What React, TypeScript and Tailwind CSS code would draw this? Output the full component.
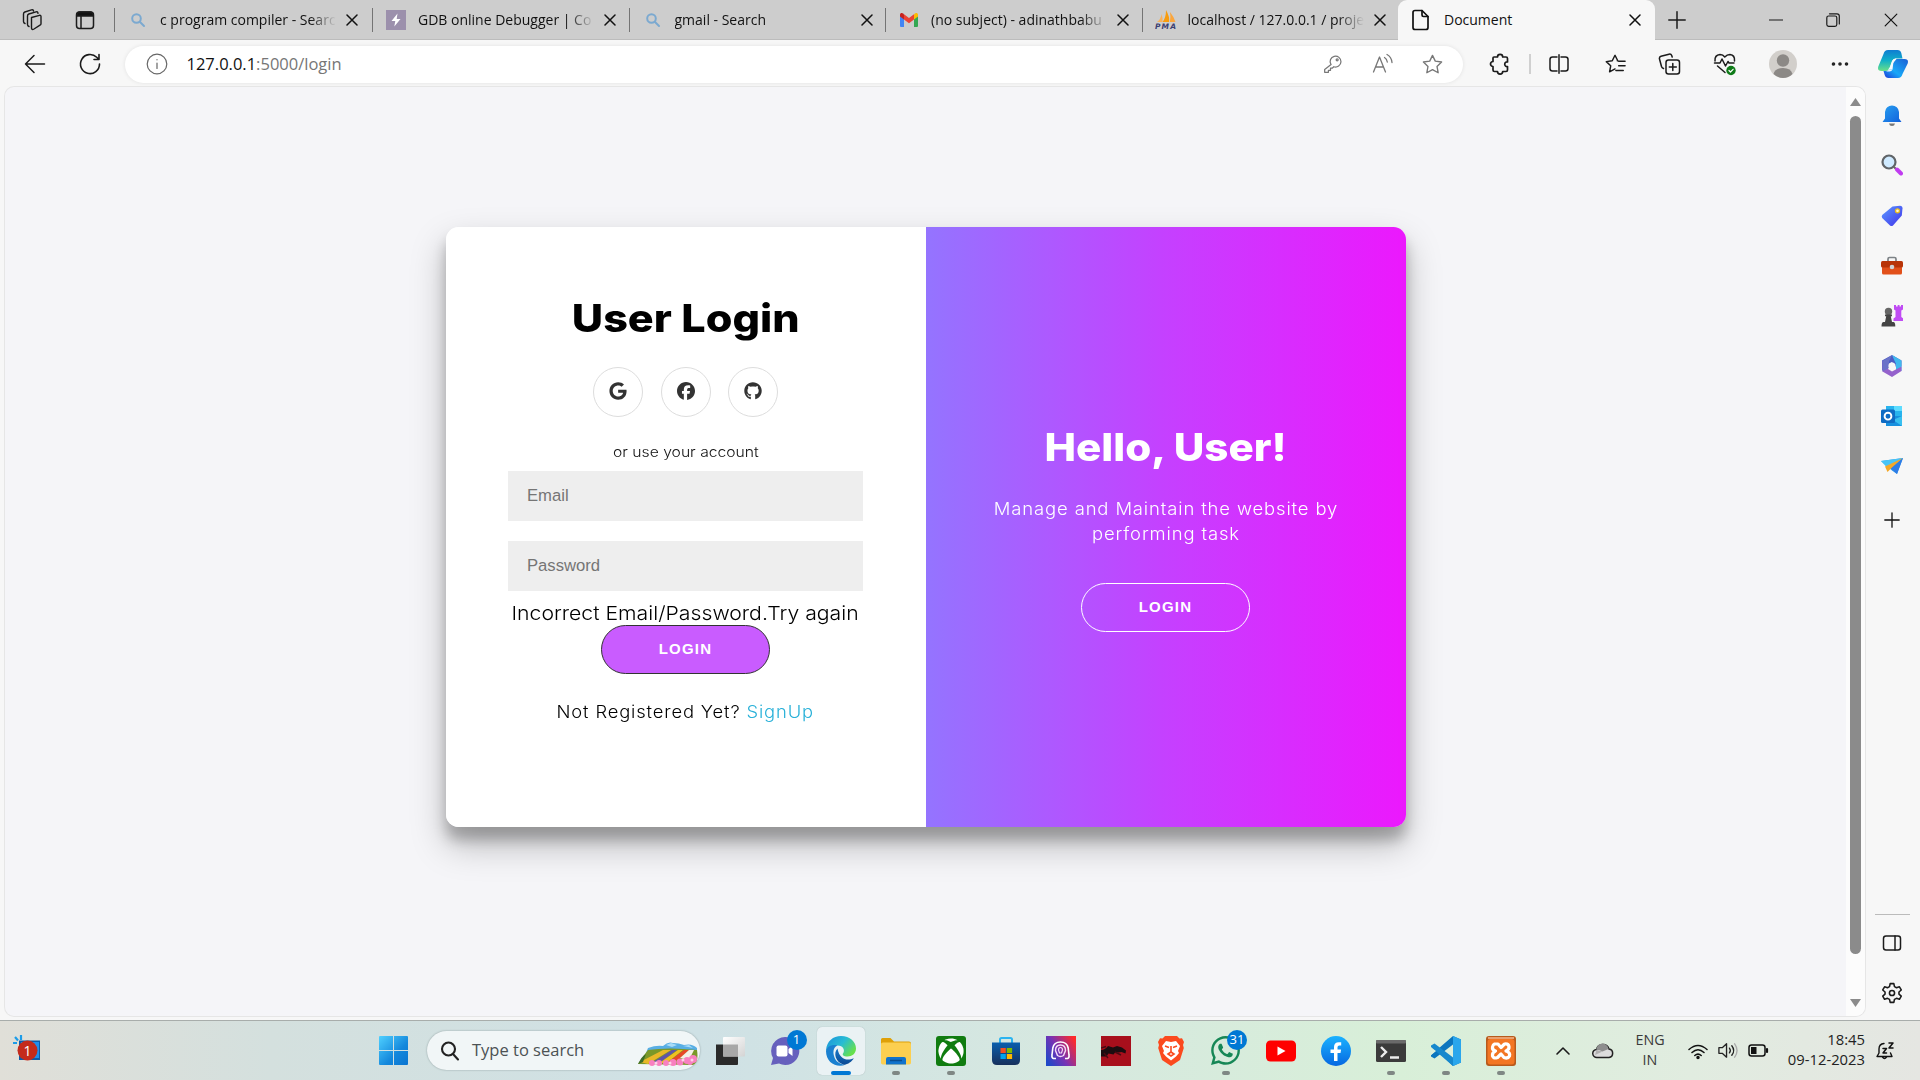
import type { ReactNode } from 'react';
import { FaFacebook, FaGithub, FaGoogle, FaXbox, FaWhatsapp } from 'react-icons/fa6';

const UI = "font-['Open_Sans',sans-serif]";
const BODY = "font-['Inter',sans-serif]";

type IconProps = { size?: number; box?: number; color?: string; sw?: number; className?: string; children: ReactNode };

function Icon({ size = 24, box = 24, color = '#1b1b1b', sw = 1.4, className = '', children }: IconProps) {
  return (
    <svg
      width={size}
      height={size}
      viewBox={`0 0 ${box} ${box}`}
      fill="none"
      stroke={color}
      strokeWidth={sw}
      strokeLinecap="round"
      strokeLinejoin="round"
      className={`shrink-0 ${className}`}
    >
      {children}
    </svg>
  );
}

function Close({ size = 12, sw = 1.5 }: { size?: number; sw?: number }) {
  return (
    <Icon size={size} box={12} sw={sw} color="#111">
      <path d="M1 1l10 10M11 1L1 11" />
    </Icon>
  );
}

function SearchFav() {
  return (
    <Icon size={16} box={16} color="#7ba9d0" sw={2}>
      <circle cx="6.5" cy="6.5" r="4.3" />
      <path d="M10 10l4 4" />
    </Icon>
  );
}

function BoltFav() {
  return (
    <svg width="20" height="20" viewBox="0 0 20 20">
      <rect width="20" height="20" fill="#9c90ac" />
      <path d="M11.5 3.5L5.5 11h3.8l-1 5.500L14.500 9h-3.800z" fill="#fff" />
    </svg>
  );
}

function GmailFav() {
  return (
    <svg width="18" height="14" viewBox="0 0 18 14">
      <path d="M0 2.500V13q0 1 1 1h3V6z" fill="#4285f4" />
      <path d="M18 2.500V13q0 1-1 1h-3V6z" fill="#34a853" />
      <path d="M14 1.500V6.500L18 3.500V2C18 0 16 -.5 14.500 .7z" fill="#fbbc04" />
      <path d="M4 1.200V6.500L0 3.500V2C0 0 2 -.5 3.500 .7z" fill="#c5221f" />
      <path d="M4 1.200l5 3.800 5-3.800V6.500l-5 3.800-5-3.800z" fill="#ea4335" />
    </svg>
  );
}

function PmaFav() {
  return (
    <svg width="22" height="20" viewBox="0 0 22 20">
      <path d="M2 12Q6 9 6.500 4Q8 8 7.500 12z" fill="#f9b25a" />
      <path d="M7.500 12Q11 8 11 0Q15 7 14 12z" fill="#f89c0e" />
      <path d="M14.800 12Q16 7 15 2Q19 7 20.500 12z" fill="#fba63c" />
      <text x="0" y="18.500" fontSize="7.500" fontWeight="700" fontStyle="italic" fill="#3c3f72" fontFamily="DejaVu Sans" textLength="21">PMA</text>
    </svg>
  );
}

function Tab({ fav, title, first }: { fav: ReactNode; title: string; first?: boolean }) {
  return (
    <div className={`flex h-6 items-center border-l border-[#747474] ${first ? 'w-[258px]' : 'w-[256.5px]'}`}>
      <div className="ml-[12px] flex w-[22px] shrink-0 items-center justify-center">{fav}</div>
      <div className="ml-[11px] w-[178px] shrink-0 overflow-hidden pb-[2px] whitespace-nowrap text-[14px] text-[#111] [mask-image:linear-gradient(to_right,#000_84%,transparent_99%)]">
        {title}
      </div>
      <div className="ml-[8px]"><Close /></div>
    </div>
  );
}

function TabStrip() {
  return (
    <div className="flex h-10 shrink-0 items-center bg-[#cdcdcd] shadow-[inset_0_-1px_0_#bcbcbc]">
      <div className="flex w-[114px] items-center">
        <Icon size={22} box={22} sw={1.400} className="ml-[21px]">
          <path d="M10.500 8.500l8-2.200q1.500-.3 1.500 1.200v7.200q0 1-1 1.500l-6 3.800q-2.500 1.300-2.500-1z" />
          <path d="M8 17.500q-1.500-.5-1.500-2V7q0-1.500 1.300-2L15 2.800q1.700-.5 2 1.500" />
          <path d="M4 14.500q-1.500-.5-1.500-2V5q0-1.500 1.300-2L10.500 .9q1.700-.4 2 1.100" />
        </Icon>
        <Icon size={20} box={20} sw={1.500} className="ml-[32px]">
          <rect x="1.500" y="2" width="17" height="16.500" rx="3" />
          <path d="M2 5q0-3 3-3h10q3 0 3 3v1H2z" fill="#111" />
          <path d="M6 6v12" />
        </Icon>
      </div>
      <Tab first fav={<SearchFav />} title="c program compiler - Searc" />
      <Tab fav={<BoltFav />} title="GDB online Debugger | Co" />
      <Tab fav={<SearchFav />} title="gmail - Search" />
      <Tab fav={<GmailFav />} title="(no subject) - adinathbabu" />
      <Tab fav={<PmaFav />} title="localhost / 127.0.0.1 / proje" />
      <div className="flex h-10 w-[257px] items-center rounded-t-[9px] bg-[#f7f7f7]">
        <Icon size={22} box={22} sw={1.700} color="#111" className="ml-[12px]">
          <path d="M5 1.500h7l6 6V18.500q0 2-2 2H5q-2 0-2-2v-15q0-2 2-2z" />
          <path d="M12 1.500V6q0 1.500 1.500 1.500H18" />
        </Icon>
        <div className="ml-[12px] w-[185px] pb-[2px] text-[14px] text-[#111]">Document</div>
        <Close />
      </div>
      <Icon size={18} box={18} sw={1.500} className="ml-[13px]"><path d="M9 .8v16.400M.8 9h16.400" /></Icon>
      <Icon size={14} box={14} sw={1.200} className="ml-[83px]"><path d="M.5 7h13" /></Icon>
      <Icon size={14} box={14} sw={1.200} className="ml-[43px]">
        <rect x=".8" y="3" width="10" height="10.300" rx="1.800" />
        <path d="M3.500 .8H11q2.300 0 2.300 2.300V11" />
      </Icon>
      <div className="ml-[44px]"><Close size={14} sw={1} /></div>
    </div>
  );
}

function Cell({ className, children }: { className: string; children: ReactNode }) {
  return <div className={`flex shrink-0 items-center justify-center ${className}`}>{children}</div>;
}

const STAR = 'M12 2.500l2.900 6 6.600.9-4.800 4.600 1.200 6.600L12 17.400l-5.900 3.200 1.200-6.600L2.500 9.400l6.600-.9z';

function Copilot() {
  return (
    <svg width="30" height="28" viewBox="0 0 30 28">
      <defs>
        <linearGradient id="cpA" x1="0" y1="0" x2="0" y2="1">
          <stop offset="0" stopColor="#0f7cd2" /><stop offset=".5" stopColor="#10b0c8" /><stop offset="1" stopColor="#6ae088" />
        </linearGradient>
        <linearGradient id="cpB" x1="1" y1="0" x2="0" y2="1">
          <stop offset="0" stopColor="#1b5fd4" /><stop offset=".6" stopColor="#18a8f8" /><stop offset="1" stopColor="#1d39d8" />
        </linearGradient>
      </defs>
      <path d="M5.500 4Q6.500 0 10 0h9.500q3 0 3.800 3l1.200 5.500H18q-3 0-4 3l-2 5.500q-1.200 4-4.500 4H3.500q-4.500 0-3.200-4.500z" fill="url(#cpA)" />
      <path d="M24.500 24Q23.500 28 20 28h-9.500q-3 0-3.800-3L5.500 21H8q3.300 0 4.500-4l3.500-5 2.500-3h8q4.500 0 3.200 4.500z" fill="url(#cpB)" />
      <path d="M17.800 8.500H19q-3 .5-3.500 3l-1 8H10q1.500-.8 2.300-3.500l1.700-5q1-2.500 3.800-2.500z" fill="#f5fafc" />
      <path d="M14.500 19.500q-.8 2-3 2H8q2-.5 3-2z" fill="#e8f4fa" />
    </svg>
  );
}

function Toolbar() {
  return (
    <div className="flex h-[47px] shrink-0 items-center bg-[#f7f7f7] pt-[1px]">
      <Cell className="w-[70px]">
        <Icon size={22} box={22} sw={1.500}><path d="M20.500 11H1.500M10 2.500L1.500 11l8.500 8.500" /></Icon>
      </Cell>
      <Cell className="w-[40px]">
        <Icon size={24} box={24} sw={1.600}><path d="M21.500 12a9.500 9.500 0 1 1-2.800-6.700l2 2M21 2.500v5h-5" /></Icon>
      </Cell>
      <div className="ml-[15px] flex h-[37px] w-[1338px] items-center rounded-full bg-white shadow-[0_0_4px_rgba(0,0,0,0.09)]">
        <Cell className="ml-[20px] w-6">
          <Icon size={22} box={22} sw={1.200} color="#666">
            <circle cx="11" cy="11" r="9.800" /><path d="M11 10v5.500M11 6.500v.3" />
          </Icon>
        </Cell>
        <div className="ml-[17.500px] text-[16.500px] text-[#111]">127.0.0.1<span className="text-[#767676]">:5000/login</span></div>
        <div className="ml-auto flex">
          <Cell className="w-[50px]">
            <Icon size={20} box={24} sw={1.500} color="#777">
              <path d="M9.500 12.500A6.500 6.500 0 1 1 13 15.300L11 17H9v2.500H6.500V22H2v-3.500l7.700-6z" /><circle cx="17" cy="7" r="1.200" />
            </Icon>
          </Cell>
          <Cell className="w-[50px]">
            <Icon size={22} box={22} sw={1.300} color="#777">
              <path d="M1.500 19L7.500 4l6 15M3.500 14h8M12.500 4.500q2.500 1.500 2.800 4.500M15 1.500q4.500 2.500 5 8" />
            </Icon>
          </Cell>
          <Cell className="mr-[6px] w-[49px]"><Icon size={23} color="#777"><path d={STAR} /></Icon></Cell>
        </div>
      </div>
      <Cell className="ml-[11px] w-[52px]">
        <Icon size={22} box={22} sw={1.700}>
          <path d="M5 4h3.500a2.600 2.600 0 0 1 5.200 0H17q1.500 0 1.500 1.500V9a2.300 2.300 0 1 0 0 4.500V17q0 1.500-1.500 1.500h-3.300a2.600 2.600 0 0 1-5.200 0H5.500Q4 18.500 4 17v-3.500a2.500 2.500 0 0 1 0-5V5q0-1 1-1z" />
        </Icon>
      </Cell>
      <div className="ml-[3px] h-[20px] w-[2px] bg-[#d0d0d0]" />
      <Cell className="w-[56px]">
        <Icon size={20} box={20} sw={1.500}><path d="M8 3H3.500Q1 3 1 5.500v9Q1 17 3.500 17H8M12 3h4.500Q19 3 19 5.500v9Q19 17 16.500 17H12M10 .8v18.400" /></Icon>
      </Cell>
      <Cell className="w-[55px]">
        <Icon size={22} box={24} sw={1.600}><path d="M14.500 8.500H15L12 2.500 9 8.500 2.500 9.400l4.800 4.600-1.200 6.600L12 17.400M16 9h7M16 14h7M13 19h8" /></Icon>
      </Cell>
      <Cell className="w-[55px]">
        <Icon size={23} box={23} sw={1.500}>
          <path d="M5.500 15.500Q4 15 3.500 13.500L1.500 6Q1 4 3 3.300L11 1.200q2-.5 2.700 1.300l.5 1.500" />
          <rect x="8" y="7" width="13.500" height="14" rx="2.500" /><path d="M14.800 10.500v7M11.300 14h7" />
        </Icon>
      </Cell>
      <Cell className="w-[55px]">
        <Icon size={24} box={24} sw={1.500}>
          <path d="M2 9Q1.500 3 7 2.500q3 0 4.800 2.500Q14 2.500 17 2.500 22 3 21.500 9M1.500 11H7l2-4 3.500 7 2.500-4.500 1 1.500h5M4.500 14l7.500 6.500" />
          <circle cx="18" cy="18.500" r="4.700" fill="#0f7b18" stroke="none" /><path d="M16 18.500l1.500 1.500 2.600-2.700" stroke="#fff" strokeWidth="1.200" />
        </Icon>
      </Cell>
      <Cell className="w-[61px]">
        <svg width="28" height="28" viewBox="0 0 28 28">
          <circle cx="14" cy="14" r="14" fill="#d2cfcb" /><circle cx="14" cy="10.500" r="6.200" fill="#8c8986" />
          <path d="M4.500 24Q6 18 14 18t9.500 6Q19.500 28 14 28t-9.500-4z" fill="#8c8986" />
        </svg>
      </Cell>
      <Cell className="w-[53px]">
        <Icon size={18} box={18} color="#222"><circle cx="2.500" cy="9" r="1.100" fill="#222" /><circle cx="9" cy="9" r="1.100" fill="#222" /><circle cx="15.500" cy="9" r="1.100" fill="#222" /></Icon>
      </Cell>
      <Cell className="w-[54px]"><Copilot /></Cell>
    </div>
  );
}

function Social({ className = '', children }: { className?: string; children: ReactNode }) {
  return <div className={`flex size-[50px] items-center justify-center rounded-full border border-[#ddd] pb-[2px] text-[18px] text-[#333] ${className}`}>{children}</div>;
}

function LoginPanel() {
  return (
    <div className="flex w-[480px] flex-col items-center rounded-l-[12.500px] bg-white px-[62.500px] text-black">
      <h1 className="mt-[64px] h-[54px] origin-center scale-x-[1.120] text-[38.500px] leading-[54px] font-extrabold whitespace-nowrap">User Login</h1>
      <div className="mt-[22px] flex">
        <Social><FaGoogle /></Social>
        <Social className="ml-[18px]"><FaFacebook /></Social>
        <Social className="ml-[17px]"><FaGithub /></Social>
      </div>
      <div className="mt-[25px] h-[20px] scale-x-[1.090] text-[14.400px] leading-[20px] font-[350] whitespace-nowrap text-[#111]">or use your account</div>
      <div className="mt-[9px] flex h-[50px] w-[355px] items-center bg-[#eee] pl-[19px] font-['Liberation_Sans',sans-serif] text-[16.670px] text-[#757575]"><span className="-mt-[2px]">Email</span></div>
      <div className="mt-[20px] flex h-[50px] w-[355px] items-center bg-[#eee] pl-[19px] font-['Liberation_Sans',sans-serif] text-[16.670px] text-[#757575]"><span className="-mt-[2px]">Password</span></div>
      <div className="mt-[10px] h-[24px] scale-x-[1.105] text-[19.200px] leading-[24px] font-[350] whitespace-nowrap">Incorrect Email/Password.Try again</div>
      <button className="flex h-[49px] w-[169px] items-center justify-center rounded-[25px] border border-[#333] bg-[#c95cff] font-['Liberation_Sans',sans-serif] text-[15px] font-bold tracking-[1.250px] text-white">LOGIN</button>
      <div className="mt-[26px] h-[25px] scale-x-[1.080] text-[17px] leading-[25px] font-[350] tracking-[0.800px] whitespace-nowrap">
        Not Registered Yet? <span className="text-[#28b0d8]">SignUp</span>
      </div>
    </div>
  );
}

function HelloPanel() {
  return (
    <div className="flex w-[480px] flex-col items-center rounded-r-[12.500px] bg-[linear-gradient(90deg,#9474ff,#c540ff_50%,#ec18fd)] text-white">
      <h1 className="mt-[193px] h-[54px] scale-x-[1.095] text-[38.500px] leading-[54px] font-extrabold whitespace-nowrap">Hello, User!</h1>
      <p className="mt-[23px] w-[330px] scale-x-[1.085] text-center text-[17px] leading-[25px] font-[350] tracking-[0.800px]">Manage and Maintain the website by performing task</p>
      <button className="mt-[36px] flex h-[49px] w-[169px] items-center justify-center rounded-[25px] border border-white font-['Liberation_Sans',sans-serif] text-[15px] font-bold tracking-[1.250px]">LOGIN</button>
    </div>
  );
}

function Scrollbar() {
  return (
    <div className="flex w-[19px] flex-col items-center bg-[#fcfcfc] pt-[11px] pb-[9px]">
      <svg width="11" height="8" viewBox="0 0 11 8"><path d="M5.500 0L11 8H0z" fill="#8b8b8b" /></svg>
      <div className="mt-[10px] h-[838px] w-[11px] rounded-full bg-[#8b8b8b]" />
      <svg className="mt-auto" width="11" height="8" viewBox="0 0 11 8"><path d="M5.500 8L11 0H0z" fill="#8b8b8b" /></svg>
    </div>
  );
}

function Sidebar() {
  const art: [string, ReactNode][] = [
    ['h-[49px]', <g key="bell"><path d="M11 3a7 7 0 0 1 7 6.500V16l2.500 3.500h-19L4 16V9.500A7 7 0 0 1 11 3z" transform="translate(0 -2.500)" fill="url(#sbBell)" /><path d="M8 18.500h6q-.5 2.500-3 2.500t-3-2.500z" fill="#777" /></g>],
    ['h-[50px]', <g key="search"><circle cx="8" cy="8" r="6.500" fill="#cfeaff" stroke="#606468" strokeWidth="2.200" /><path d="M13 13l2.500 2.500" stroke="#666" strokeWidth="2" /><path d="M16 15.500l4 4" stroke="#c03cf0" strokeWidth="4" strokeLinecap="round" /></g>],
    ['h-[51px]', <g key="tag"><path d="M11.500 1.500L19 .8q2.500 0 2.500 2.500l-.7 7.200L12 20.500q-1.500 1-3 0L1.200 13q-1-1.500 0-3z" fill="url(#sbTag)" /><circle cx="16.500" cy="5.800" r="2" fill="#fff8d0" stroke="#e8b820" strokeWidth="1.300" /></g>],
    ['h-[50px]', <g key="case"><path d="M7 6V4q0-1.500 1.500-1.500h5Q15 2.500 15 4v2" fill="none" stroke="#7d8286" strokeWidth="1.700" /><rect x="1" y="11" width="20" height="8.500" rx="1.500" fill="#e2501a" /><rect x="0" y="6" width="22" height="6.500" rx="1.500" fill="#b83408" /><circle cx="11" cy="12" r="2.300" fill="#d0d4d6" /></g>],
    ['h-[50px]', <g key="chess"><path d="M13 0h2v1.500h1.700V0h1.800v1.500h1.500V0h2v4.500l-1.700 1v6.500l2.200 1.500V16h-10v-2.500l2-1.500V5.500L13 4.500z" fill="#c04cf4" /><circle cx="7.500" cy="6.500" r="3.700" fill="#666" /><path d="M4 9.500h7v1.800h-1.200l1.200 5.700h1.500q1.800 0 1.800 4.500H.5Q.5 17 2.500 17H4l1.200-5.700H4z" fill="#444" /></g>],
    ['h-[50px]', <g key="m365"><path d="M11 0l9.500 5.500v6H14L11 7 6 10v7L1 15V5.500z" fill="#4c5cc4" /><path d="M11 0l9.500 5.500V16H15V9z" fill="#40b8ee" /><path d="M1.500 6L7 9v5l4 2.500 9.500-5V16L11 22l-9.500-5.500z" fill="#9562cc" /><path d="M1.500 6L11 .3 8 6.500V13L1.500 16.500z" fill="#6a72c8" /><circle cx="11" cy="11" r="3.600" fill="#f7f7f7" /></g>],
    ['h-[50px]', <g key="outlook"><path d="M5 1h16v10H5z" fill="#28b4ee" /><path d="M13 1h8v5h-8z" fill="#5cdcff" /><path d="M5 11l16 0v10H5z" fill="#1790df" /><path d="M21 11v10L12 15z" fill="#38c0f0" /><rect x="0" y="4.500" width="14" height="13.500" rx="1.500" fill="#0f6cc4" /><circle cx="7" cy="11.200" r="3.400" fill="none" stroke="#fff" strokeWidth="1.900" /></g>],
    ['h-[50px]', <g key="drop"><path d="M0 6l22-3-6 16-5-3.500z" fill="#2c98ec" /><path d="M0 6l22-3L5.500 12z" fill="#48c4f6" /><path d="M4 11.500L22 3 10 13.500 6.500 17z" fill="#f4a828" /><path d="M10 13.500L22 3l-6 16z" fill="#2e7ce6" /></g>],
  ];
  return (
    <div className="flex w-[54px] flex-col items-center pt-[4px]">
      <svg width="0" height="0">
        <defs>
          <linearGradient id="sbBell" x1="0" y1="0" x2="1" y2="1"><stop stopColor="#28a0f0" /><stop offset="1" stopColor="#1160dc" /></linearGradient>
          <linearGradient id="sbTag" x1="0" y1="0" x2="1" y2="1"><stop stopColor="#5c9cff" /><stop offset="1" stopColor="#4030ea" /></linearGradient>
        </defs>
      </svg>
      {art.map(([h, a], i) => (
        <Cell key={i} className={h}><svg width="22" height="22" viewBox="0 0 22 22">{a}</svg></Cell>
      ))}
      <Cell className="mt-[6px] h-[46px]"><Icon size={16} box={16} sw={1.300} color="#111"><path d="M8 .8v14.400M.8 8h14.400" /></Icon></Cell>
      <div className="mt-auto h-px w-[35px] bg-[#bbb]" />
      <Cell className="mt-[3px] h-[50px]">
        <Icon size={20} box={20} sw={1.500}><rect x="1.500" y="3" width="17" height="14" rx="2.500" /><path d="M13 3v14" /></Icon>
      </Cell>
      <Cell className="mb-[2px] h-[50px]">
        <Icon size={22} box={24} sw={1.700}>
          <path d="M10 1.800h4l.7 3.300 2.200 1.200 3.200-1.100 2 3.500-2.500 2.200v2.300l2.500 2.200-2 3.500-3.200-1.100-2.200 1.200L14 22.200h-4L9.300 19l-2.200-1.200-3.200 1.100-2-3.500 2.500-2.200v-2.300L1.900 8.700l2-3.500 3.200 1.100 2.200-1.200z" /><circle cx="12" cy="12" r="2.800" />
        </Icon>
      </Cell>
    </div>
  );
}

function Widgets() {
  return (
    <svg width="30" height="26" viewBox="0 0 30 26">
      <path d="M1 8h4M3 2l3 3.500M9 0v5" stroke="#1d9ce8" strokeWidth="2.200" />
      <rect x="7" y="5.500" width="21" height="19.500" fill="#0b5cab" /><rect x="9" y="7" width="18" height="16" fill="#1f8fee" />
      <circle cx="15.500" cy="15.500" r="10" fill="#c42b1c" />
      <text x="15.500" y="20.500" textAnchor="middle" fontSize="14" fill="#fff" fontFamily="Open Sans">1</text>
    </svg>
  );
}

function FlowerArt() {
  return (
    <svg width="60" height="24" viewBox="0 0 60 24">
      <path d="M10 6Q18 3 25 4q5-5 10-3 6 0 11 2 8-2 13 3v5H8z" fill="#58aee4" />
      <path d="M28 3l5-2 6 2-5 2zM45 4l6-1 4 3z" fill="#a8dcf8" />
      <path d="M10 8Q30 5 59 8q2 12-4 15L0 22q5-8 10-14z" fill="#7a9828" />
      <path d="M2 20L25 8h8L10 22z" fill="#e8b828" /><path d="M12 22L34 8h5L20 22z" fill="#6054a8" />
      <path d="M20 22L40 8h5L30 20z" fill="#f0c020" /><path d="M30 20L46 8h5L40 18z" fill="#e84828" />
      <path d="M42 16L51 8h5l-5 10z" fill="#f4f0e8" /><path d="M0 22Q4 14 8 12L5 20z" fill="#3c6c28" />
      <g fill="#f880c0"><circle cx="14" cy="21" r="3" /><circle cx="21" cy="21" r="3" /><circle cx="28" cy="21" r="3" /><circle cx="35" cy="20.500" r="3.500" /><circle cx="42" cy="20" r="3.500" /><circle cx="49" cy="18.500" r="3.500" /><circle cx="55" cy="17" r="4" /><circle cx="52" cy="20" r="3" /></g>
      <g fill="#ffd0e8"><circle cx="18" cy="21" r="1.500" /><circle cx="32" cy="21" r="1.500" /><circle cx="45" cy="18" r="1.500" /><circle cx="54" cy="18" r="1.500" /></g>
    </svg>
  );
}

function TaskIcon({ children, dot, active, badge }: { children: ReactNode; dot?: boolean; active?: boolean; badge?: string }) {
  return (
    <div className="flex w-[55px] justify-center">
      <div className={`relative flex size-[48px] items-center justify-center rounded-[5px] ${active ? 'bg-[#eaf2f4] shadow-[0_0_1px_#9aa]' : ''}`}>
        {children}
        {badge && <div className="absolute top-[3px] left-[25px] flex h-[20px] min-w-[20px] items-center justify-center rounded-full bg-[#0078d4] px-[3px] text-[13px] text-white">{badge}</div>}
        {active && <div className="absolute bottom-0 h-[4px] w-[20px] rounded-full bg-[#0078d4]" />}
        {dot && <div className="absolute bottom-0 h-[4px] w-[8px] rounded-full bg-[#7f8784]" />}
      </div>
    </div>
  );
}

function Art({ children }: { children: ReactNode }) {
  return <svg width="30" height="30" viewBox="0 0 30 30">{children}</svg>;
}

function TaskApps() {
  return (
    <div className="ml-[3px] flex">
      <TaskIcon><Art>
        <defs><linearGradient id="tv" x1="0" y1="0" x2="1" y2="1"><stop stopColor="#fff" /><stop offset="1" stopColor="#d4d4d4" /></linearGradient></defs>
        <rect x="-1" y="8.500" width="23" height="20.500" rx="1" fill="#2a2a2a" /><rect x="7" y="1" width="22" height="19.500" rx="1" fill="url(#tv)" /><path d="M7 8.500h15v12H7z" fill="#a8a8a8" />
      </Art></TaskIcon>
      <TaskIcon badge="1"><Art>
        <path d="M14 1a14 14 0 1 1-6 26.500L0 29l2-7A14 14 0 0 1 14 1z" fill="#6660bd" /><rect x="5.500" y="9.500" width="11" height="11" rx="2" fill="#fff" /><path d="M17.500 13l4-3v10l-4-3z" fill="#fff" />
      </Art></TaskIcon>
      <TaskIcon active><Art>
        <defs>
          <linearGradient id="egA" x1="0" y1="0" x2="1" y2=".6"><stop stopColor="#1a90dc" /><stop offset=".55" stopColor="#28bcd4" /><stop offset="1" stopColor="#66e04c" /></linearGradient>
          <linearGradient id="egB" x1="0" y1="0" x2="0" y2="1"><stop stopColor="#1878c8" /><stop offset="1" stopColor="#0c4a94" /></linearGradient>
        </defs>
        <path d="M0 14C1 5 7 0 15 0c9 0 15 6 15 12.500 0 5-4 8-8.500 8-4 0-5.500-1.500-4.500-3 2.500-3.500 0-8-5.500-8C6 9.500 1 12 0 15z" fill="url(#egA)" />
        <path d="M0 15C1 10 7 8 11.500 9.500 8 11 6.500 15 8 20c1.500 6 7 9 12 8.500-9 4-20-1.500-20-13.500z" fill="#1a80d0" />
        <path d="M11.500 12.500C7 17 9.500 26.500 18 28.800c4-.5 8-3.300 9.800-6.600-6 3-14.300 1.800-16.300-9.700z" fill="url(#egB)" />
      </Art></TaskIcon>
      <TaskIcon dot><Art>
        <path d="M0 3.500Q0 2 1.500 2h8L13 5.500H28q2 0 2 2V14H0z" fill="#dfa008" /><rect x="0" y="6.500" width="30" height="22" rx="1.800" fill="#fccf50" /><path d="M5 28.500V23q0-2 2-2h16q2 0 2 2v5.500z" fill="#1173cc" /><path d="M9 24.500h12" stroke="#0a4d90" strokeWidth="1.500" />
      </Art></TaskIcon>
      <TaskIcon dot><div className="flex size-[30px] items-center justify-center rounded-[3px] bg-[#107c10] text-[26px] text-white"><FaXbox /></div></TaskIcon>
      <TaskIcon><Art>
        <defs><linearGradient id="st" x1="0" y1="0" x2="0" y2="1"><stop stopColor="#0a5fae" /><stop offset="1" stopColor="#17305c" /></linearGradient></defs>
        <path d="M9 7V3.500Q9 2 10.500 2h9Q21 2 21 3.500V7" fill="none" stroke="#2cb4f0" strokeWidth="2" /><path d="M1 6.500h28V24q0 5-5 5H6q-5 0-5-5z" fill="url(#st)" />
        <rect x="9.500" y="12" width="5.300" height="5" fill="#f25022" /><rect x="15.800" y="12" width="5.300" height="5" fill="#7fba00" /><rect x="9.500" y="18" width="5.300" height="5" fill="#00a4ef" /><rect x="15.800" y="18" width="5.300" height="5" fill="#ffb900" />
      </Art></TaskIcon>
      <TaskIcon><Art>
        <defs><linearGradient id="pp" x1="0" y1=".8" x2="1" y2=".2"><stop stopColor="#1f48c8" /><stop offset=".45" stopColor="#7832b4" /><stop offset="1" stopColor="#ff2a2a" /></linearGradient></defs>
        <rect width="30" height="30" fill="url(#pp)" />
        <path d="M10 22.500H7.500Q5.500 22 6 19l.8-7Q8 6 14.500 6t7.700 6l.8 7q.5 3-1.500 3.500H19" fill="none" stroke="#fff" strokeWidth="1.600" />
        <path d="M11.500 19.500L9.500 14.500Q9.500 9 14.500 9t5 5.500l-2 5q-3 2-6 0z" fill="none" stroke="#f4dcf8" strokeWidth="1.400" />
        <path d="M12.500 14q0-2.500 2-2.500t2 2.500l-1 3h-2z" fill="none" stroke="#f4dcf8" strokeWidth="1.200" />
      </Art></TaskIcon>
      <TaskIcon><Art>
        <rect width="30" height="30" fill="#a80f1c" />
        <path d="M0 14Q4 14 7 10l5 1.500 4-1.500 5 1.500 4 3-.5 3-4-1.500-3 .5-3-.5-2 2.500-5-1-2 3H0z" fill="#1c0d10" /><path d="M0 12l5-1.500M3 17l4 5M14 16l6 3" stroke="#4a0a12" strokeWidth="1.500" fill="none" />
      </Art></TaskIcon>
      <TaskIcon><Art>
        <path d="M9 0h12l2.500 2.500 2.500-.3L28 6l-1 3 .8 3-3.800 12L15 30 6 24 2.200 12 3 9 2 6l2-3.800 2.500.3z" fill="#fb4a1e" />
        <path d="M10 5l5 1 5-1 4 5-2 5 1 2-3 3.500-5 4-5-4L7 17l1-2-2-5z" fill="#fff" /><path d="M9 10l4 1.500M21 10l-4 1.500M15 10v6l-3 2 3 2 3-2-3-2" stroke="#fb4a1e" strokeWidth="1.600" fill="none" />
      </Art></TaskIcon>
      <TaskIcon dot badge="31"><span className="text-[33px] text-[#168756]"><FaWhatsapp /></span></TaskIcon>
      <TaskIcon><Art><rect x="0" y="4.500" width="30" height="21" rx="4.500" fill="#f00" /><path d="M11.500 10.500l8 4.500-8 4.500z" fill="#fff" /></Art></TaskIcon>
      <TaskIcon><Art>
        <defs><linearGradient id="fb" x1="0" y1="0" x2="0" y2="1"><stop stopColor="#1ab2ff" /><stop offset="1" stopColor="#0668e1" /></linearGradient></defs>
        <circle cx="15" cy="15" r="15" fill="url(#fb)" /><path d="M13 25v-8H9.500v-3.500H13V11q0-4.800 4.800-4.800h2.400v3.300h-1.900q-1.800 0-1.800 1.800v2.200h3.600l-.6 3.500h-3v8z" fill="#fff" />
      </Art></TaskIcon>
      <TaskIcon dot><Art><rect x="0" y="4" width="30" height="22" rx="1.500" fill="#3b3b3b" /><rect x="0" y="4" width="30" height="3.500" rx="1" fill="#6a6a6a" /><path d="M5 11l5 5-5 5M14 21.500h9" fill="none" stroke="#ececec" strokeWidth="2.400" /></Art></TaskIcon>
      <TaskIcon dot><Art>
        <path d="M22 0l8 3.500v23L22 30 9.500 18 3.500 22.500 0 20.500V19L22 0z" fill="#0b75be" /><path d="M0 9.500L3.500 7.500 22 21.500V30L0 11z" fill="#1788cd" /><path d="M22 0l8 3.500v23L22 30z" fill="#2aa6ec" /><path d="M22 8.500v13L13.500 15z" fill="#dcefdc" /><path d="M0 12.500L5 15l-5 4z" fill="#dcefdc" />
      </Art></TaskIcon>
      <TaskIcon dot><Art>
        <rect x="0" y="0" width="30" height="30" rx="3" fill="#b85a1c" /><rect x="1.500" y="3" width="27" height="25.500" rx="3" fill="#f37623" /><path d="M2 1h26v2H2z" fill="#e8a070" />
        <path d="M8.500 8h3.500l3 3.500L18.500 8q4-.5 4.500 2.500t-3 4.500q4.500 1.500 3.500 5-1.500 3-5.500 1.500l-3-3.500-3.500 3.500q-4 1.500-5-1.500-.5-3.500 3-5-3.500-1-3-4 .5-2.500 2-3z" fill="none" stroke="#fff" strokeWidth="3.200" strokeLinejoin="round" />
      </Art></TaskIcon>
    </div>
  );
}

function Taskbar() {
  return (
    <div className="flex h-[60px] shrink-0 items-center border-t border-[#a8adab] bg-[linear-gradient(90deg,#e0dfd8_0px,#d4e0de_270px,#cfe1e5_700px,#d6e8e0_1050px,#d8efd8_1400px,#e1ece0_1690px,#e5e6e2_1920px)] text-[#222]">
      <div className="ml-[12px] flex w-[367px] items-center"><div className="-mt-[6px]"><Widgets /></div></div>
      <svg width="29" height="29" viewBox="0 0 29 29">
        <defs><linearGradient id="win" gradientUnits="userSpaceOnUse" x1="0" y1="0" x2="29" y2="29"><stop stopColor="#4fd0ff" /><stop offset=".6" stopColor="#1488dc" /><stop offset="1" stopColor="#0a74d0" /></linearGradient></defs>
        <path d="M0 1q0-1 1-1h13v14H0zM15 0h13q1 0 1 1v13H15zM0 15h14v14H1q-1 0-1-1zM15 15h14v13q0 1-1 1H15z" fill="url(#win)" />
      </svg>
      <div className="ml-[19px] flex h-[39px] w-[273px] items-center rounded-full bg-[#f1f6f7] shadow-[0_0_2px_#8a9a9c]">
        <Icon size={22} box={22} sw={2.100} color="#222" className="ml-[12px]"><circle cx="9.500" cy="9" r="6.500" /><path d="M14 14l5 5.500" /></Icon>
        <div className="ml-[11px] w-[166px] text-[16.500px] text-[#4c5254]">Type to search</div>
        <div className="mt-[7px]"><FlowerArt /></div>
      </div>
      <TaskApps />
      <Cell className="ml-[21px] w-[28px]"><Icon size={16} box={16} sw={1.600}><path d="M2 11l6-6 6 6" /></Icon></Cell>
      <Cell className="ml-[14px] w-[24px]">
        <svg width="22" height="18" viewBox="0 0 22 18"><path d="M5 15.500A4 4 0 0 1 4.500 7.500 6.500 6.500 0 0 1 17 7a4.300 4.300 0 0 1 0 8.500z" fill="#dcdcdc" stroke="#222" strokeWidth="1.500" /><path d="M4.500 8a6 6 0 0 1 12-1l-6 2.500L7 8z" fill="#8e8e8e" /><path d="M4.500 8l6 1.500L3 13z" fill="#b0b0b0" /></svg>
      </Cell>
      <div className="ml-[15px] flex w-[40px] flex-col items-center pb-[1px] text-[14.300px] leading-[20px] text-[#3a3a3a]"><span>ENG</span><span>IN</span></div>
      <Cell className="ml-[17px] w-[22px]">
        <Icon size={20} box={20} sw={1.500} color="#111"><path d="M1 8.500q9-8 18 0M4 11.500q6-5.500 12 0M6.800 14.500q3.200-2.800 6.400 0" /><circle cx="10" cy="16.500" r="1" fill="#111" /></Icon>
      </Cell>
      <Cell className="ml-[7px] w-[22px]">
        <Icon size={21} box={22} sw={1.400} color="#222"><path d="M2 8h3.500L10 4v14l-4.500-4H2zM13 8.500q2 2.500 0 5M15.500 6q4 5 0 10" /><path d="M18.500 4q5 7 0 14" stroke="#aaa" /></Icon>
      </Cell>
      <Cell className="ml-[9px] w-[22px]">
        <Icon size={21} box={21} sw={1.500} color="#111"><rect x="1" y="5" width="16" height="11" rx="2.500" /><rect x="3" y="7" width="5.500" height="7" fill="#111" stroke="none" /><path d="M19 9v3" strokeWidth="2.200" /></Icon>
      </Cell>
      <div className="ml-[16px] flex w-[80px] flex-col items-end pb-[3px] text-[14.800px] leading-[20px]"><span>18:45</span><span>09-12-2023</span></div>
      <Cell className="ml-[9px] w-[22px]">
        <Icon size={20} box={20} sw={1.400} color="#111"><path d="M9 2.500Q4 3 4 8v4l-2 3.500h15L15.500 12M7.500 16q2 3 4 0" /><path d="M8 7.500h3.500L8 12h3.500M14 2h4l-4 5h4" strokeWidth="1.500" /></Icon>
      </Cell>
    </div>
  );
}

export default function App() {
  return (
    <div className={`flex h-[1080px] w-[1920px] flex-col overflow-hidden bg-[#f7f7f7] ${UI}`}>
      <TabStrip />
      <Toolbar />
      <div className="flex min-h-0 flex-1">
        <div className="mb-[4px] ml-[5px] flex w-[1860px] shrink-0 overflow-hidden rounded-[9px] bg-[#f5f5f8] shadow-[0_0_0_1px_#e6e6e6]">
          <div className={`flex flex-1 justify-center pt-[140px] ${BODY}`}>
            <div className="flex h-[600px] rounded-[12.500px] shadow-[0_17.500px_35px_rgba(0,0,0,0.25),0_12.500px_12.500px_rgba(0,0,0,0.22)]">
              <LoginPanel />
              <HelloPanel />
            </div>
          </div>
          <Scrollbar />
        </div>
        <Sidebar />
      </div>
      <Taskbar />
    </div>
  );
}
